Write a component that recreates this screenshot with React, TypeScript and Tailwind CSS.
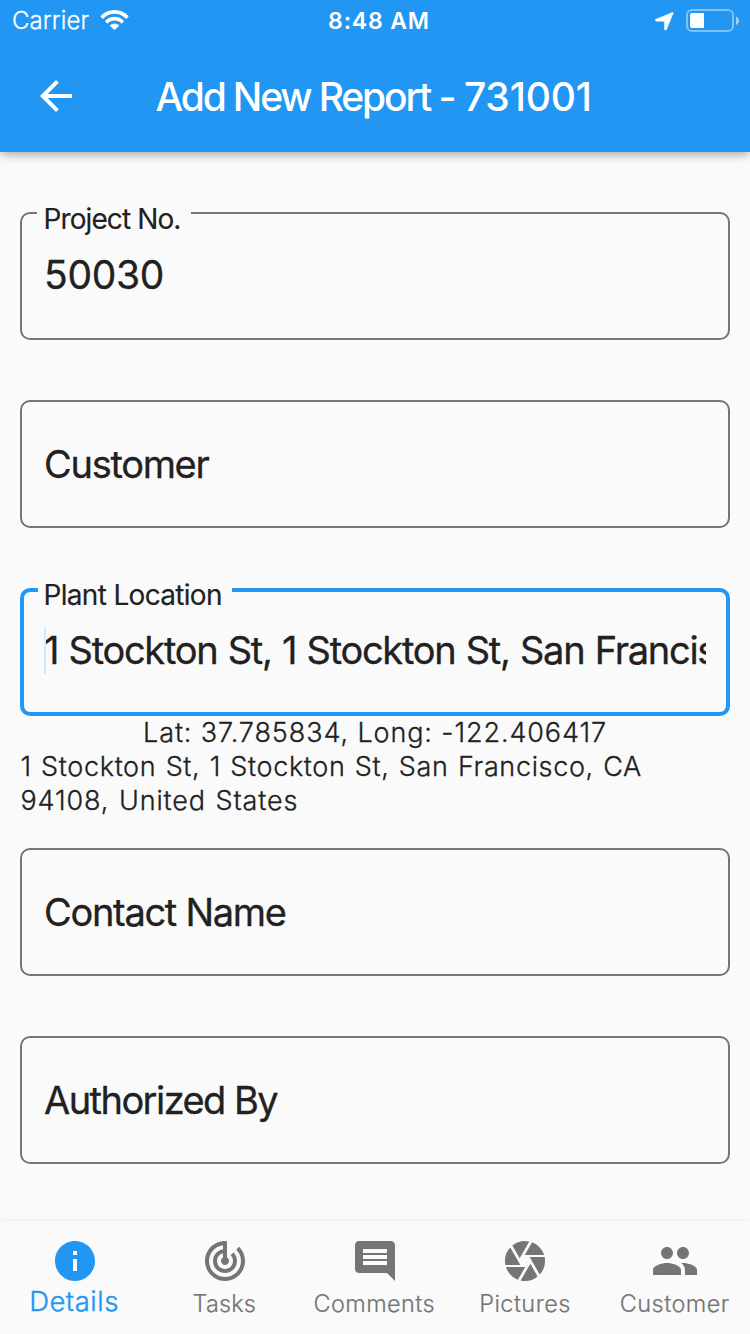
import type { ReactNode } from "react";
import { MdArrowBack, MdCamera, MdComment, MdInfo, MdPeople, MdTrackChanges } from "react-icons/md";

function StatusBar() {
  return (
    <div className="grid h-10 grid-cols-3 items-center">
      <div className="flex h-10 items-center pl-[12px]">
        <span className="mt-[2px] text-[24px] font-light leading-10 tracking-[0.1px] [-webkit-text-stroke:0.3px_white]">Carrier</span>
        <svg className="ml-[11px]" width="29" height="20" viewBox="0 0 29 20">
          <path fill="#fff" d="M.3 6.200C4.200 2.200 9 0 14.500 0s10.300 2.200 14.200 6.200l-2.500 2.700C22.800 5.500 19 3.700 14.500 3.700S6.200 5.500 2.800 8.900z" />
          <path fill="#fff" d="M4.900 11C7.600 8.300 10.700 6.800 14.500 6.800s6.900 1.500 9.600 4.200l-2.500 2.700c-2-2-4.300-3.200-7.100-3.200s-5.100 1.200-7.100 3.200z" />
          <path fill="#fff" d="M9.700 15.700c1.300-1.400 2.900-2.200 4.800-2.200s3.500.8 4.800 2.200L14.500 20z" />
        </svg>
      </div>
      <span className="h-10 pl-[8px] text-center text-[23px] font-semibold leading-[42px] tracking-[0.85px]">8:48 AM</span>
      <div className="flex h-10 items-center justify-end pr-[11px]">
        <svg className="mt-[2px]" width="19" height="19" viewBox="0 0 19 19">
          <path fill="#fff" stroke="#fff" strokeWidth=".4" d="M17.300.4c.9-.3 1.200.2.900.9l-6.700 16.200c-.4.900-2.100.8-2.100-.4V9.300H1.200C.3 9.300-.1 7.700.8 7.300z" />
        </svg>
        <svg className="ml-3" width="53" height="23" viewBox="0 0 53 23">
          <rect x="1" y="1" width="46" height="21" rx="5" fill="none" stroke="#fff" strokeOpacity=".42" strokeWidth="2" />
          <path fill="#fff" d="M18 4H6a2 2 0 0 0-2 2v11a2 2 0 0 0 2 2h12z" />
          <path fill="#fff" fillOpacity=".55" d="M50 7.500c4 1.600 4 6.900 0 8.500z" />
        </svg>
      </div>
    </div>
  );
}

type FieldProps = { focused?: boolean; label?: string; labelClass?: string; children: ReactNode };

function Field({ focused, label, labelClass, children }: FieldProps) {
  return (
    <div
      className={`relative flex h-32 shrink-0 rounded-[10px] ${
        focused ? "border-4 border-[#2196f3] px-5" : "border-2 border-[#757575] px-[22px]"
      } ${label ? "items-start" : "items-center"}`}
    >
      {label && (
        <span
          className={`absolute h-9 bg-[#fafafa] text-[28px] leading-9 [-webkit-text-stroke:0.15px_#212121] ${labelClass} ${
            focused ? "-top-[15px] left-[14px] pl-[5.5px]" : "-top-[13px] left-[15px] pl-[6.5px]"
          }`}
        >
          {label}
        </span>
      )}
      <div
        className={`w-full overflow-hidden whitespace-nowrap text-[38px] leading-[48px] [-webkit-text-stroke:0.3px_#212121] ${
          label ? (focused ? "mt-[34px]" : "mt-[37px]") : ""
        }`}
      >
        {children}
      </div>
    </div>
  );
}

const tabs = [
  { label: "Details", Icon: MdInfo, text: "mr-[2px] text-[27.5px] tracking-[0.5px] leading-[32px] [-webkit-text-stroke:0.4px_#2196f3]", active: true },
  { label: "Tasks", Icon: MdTrackChanges, text: "mr-[1.5px] text-[23.5px] tracking-[0.1px] leading-[38px] [-webkit-text-stroke:0.2px_#757575]" },
  { label: "Comments", Icon: MdComment, text: "mr-[1.5px] text-[23.5px] tracking-[0.4px] leading-[38px] [-webkit-text-stroke:0.2px_#757575]" },
  { label: "Pictures", Icon: MdCamera, text: "text-[23.5px] tracking-[0.45px] leading-[38px] [-webkit-text-stroke:0.2px_#757575]" },
  { label: "Customer", Icon: MdPeople, text: "mr-[0.5px] text-[23.5px] tracking-[0.45px] leading-[38px] [-webkit-text-stroke:0.2px_#757575]" },
];

export default function App() {
  return (
    <div className="flex h-[1334px] w-[750px] flex-col overflow-hidden bg-[#fafafa] font-['Inter',sans-serif] text-[#212121]">
      <header className="z-10 h-[152px] shrink-0 bg-[#2196f3] text-white shadow-[0_4px_8px_-2px_rgba(0,0,0,0.2),0_4px_10px_rgba(0,0,0,0.14)]">
        <StatusBar />
        <div className="flex h-28 items-center pl-8">
          <MdArrowBack size={48} />
          <h1 className="ml-[75.5px] mt-[2px] whitespace-nowrap text-[39px] font-medium tracking-[-2.05px]">
            <span className="tracking-[-2.15px]">Add New Report</span> - <span className="ml-px tracking-[-0.15px]">731001</span>
          </h1>
        </div>
      </header>

      <main className="flex min-h-0 flex-1 flex-col overflow-hidden px-5 pt-[60px]">
        <Field label="Project No." labelClass="w-[154px] tracking-[-0.9px]">
          <span className="text-[39px] tracking-[-0.3px]">50030</span>
        </Field>
        <div className="h-[60px] shrink-0" />
        <Field>
          <span className="tracking-[-1.3px]">Customer</span>
        </Field>
        <div className="h-[60px] shrink-0" />
        <Field focused label="Plant Location" labelClass="w-[194px] tracking-[-0.68px]">
          <span className="relative tracking-[-1.29px] [word-spacing:1px]">
            <span className="absolute left-0 top-0 h-12 w-[2px] bg-[#d3e9fc]" />
            1 Stockton St, 1 Stockton St, San Francisco, CA 94108
          </span>
        </Field>
        <div className="mb-[30px] text-[27px] font-light leading-[34px] [-webkit-text-stroke:0.3px_#212121]">
          <p className="text-center tracking-[0.89px]">Lat: 37.785834, Long: -122.406417</p>
          <p className="pl-[0.5px] tracking-[0.65px] [word-spacing:1.1px]">
            1 Stockton St, 1 Stockton St, San Francisco, CA
            <br />
            <span className="tracking-[0.87px]">94108, United States</span>
          </p>
        </div>
        <Field>
          <span className="tracking-[-1.3px]">Contact Name</span>
        </Field>
        <div className="h-[60px] shrink-0" />
        <Field>
          <span className="tracking-[-1.55px]">Authorized By</span>
        </Field>
      </main>

      <nav className="grid h-[113px] shrink-0 grid-cols-5 bg-[#fafafa] pt-4 shadow-[0_-1px_4px_rgba(0,0,0,0.06)]">
        {tabs.map(({ label, Icon, text, active }) => (
          <div key={label} className={`flex flex-col items-center font-light ${active ? "text-[#2196f3]" : "text-[#757575]"}`}>
            <Icon size={48} />
            <span className={text}>{label}</span>
          </div>
        ))}
      </nav>
    </div>
  );
}
